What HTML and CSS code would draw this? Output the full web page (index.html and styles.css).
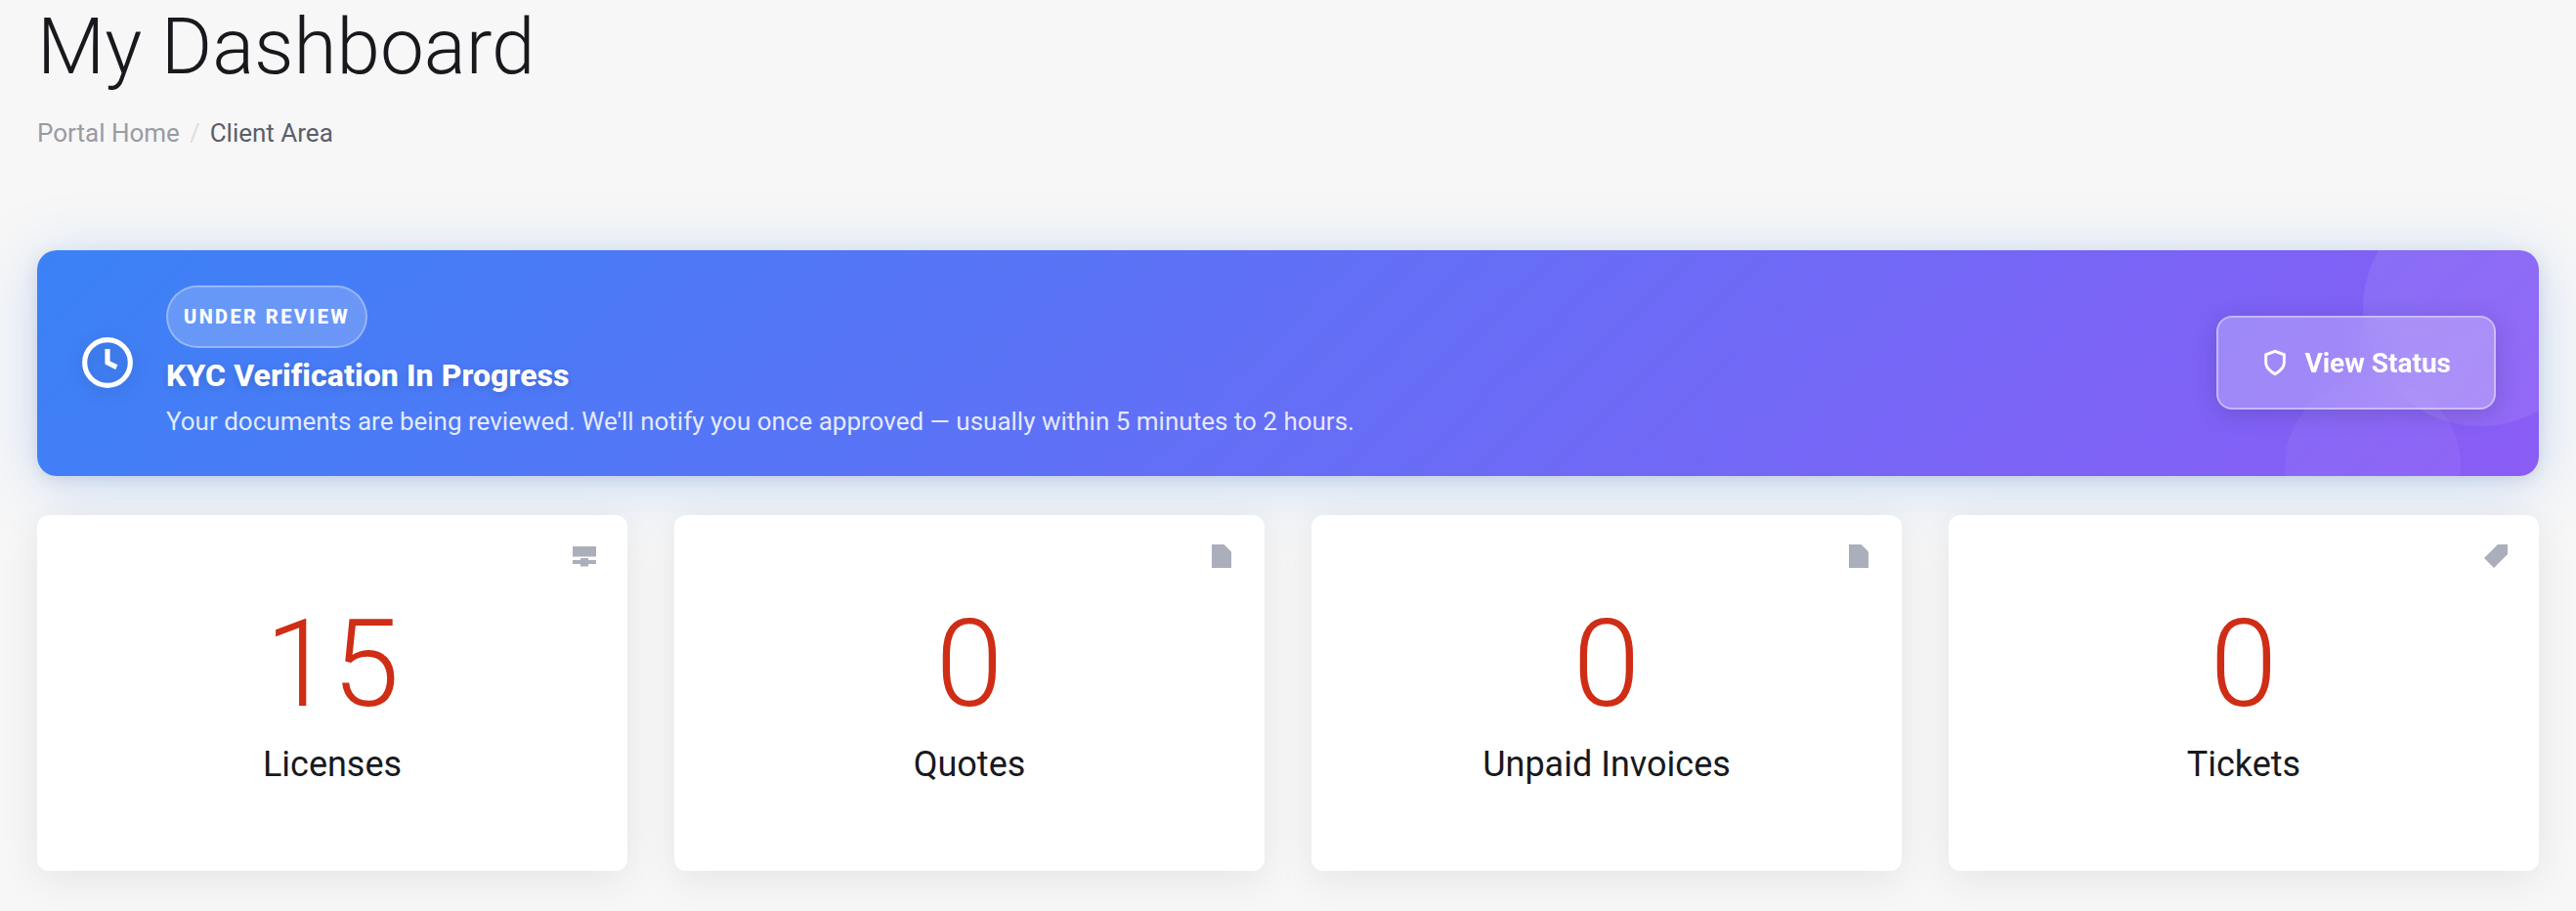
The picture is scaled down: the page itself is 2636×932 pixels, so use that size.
FILE: index.html
```
<!DOCTYPE html>
<html lang="en">
<head>
    <meta charset="UTF-8">
    <meta name="viewport" content="width=device-width, initial-scale=1.0">
    <title>My Dashboard</title>
    <link rel="stylesheet" href="styles.css">
</head>
<body>
    <header class="page-header">
        <h1>My Dashboard</h1>
        <nav class="breadcrumb">
            <a href="#">Portal Home</a>
            <span class="separator">/</span>
            <span class="current">Client Area</span>
        </nav>
    </header>

    <section class="kyc-banner">
        <svg class="kyc-icon" viewBox="0 0 24 24" fill="none" stroke="currentColor" stroke-width="2.2">
            <circle cx="12" cy="12" r="10"/>
            <polyline points="12 6 12 12 16 14"/>
        </svg>
        <div class="kyc-content">
            <span class="kyc-badge">Under Review</span>
            <h2>KYC Verification In Progress</h2>
            <p>Your documents are being reviewed. We'll notify you once approved — usually within 5 minutes to 2 hours.</p>
        </div>
        <a href="#" class="kyc-button">
            <svg viewBox="0 0 24 24" fill="none" stroke="currentColor" stroke-width="2.5">
                <path d="M12 22s8-4 8-10V5l-8-3-8 3v7c0 6 8 10 8 10z"/>
            </svg>
            View Status
        </a>
    </section>

    <main class="tiles">
        <a href="#" class="tile">
            <svg class="tile-icon" viewBox="0 0 24 24" fill="currentColor">
                <path d="M0 2h24v10.500H0zM0 16h8v-2h8v2h8v4h-8v2.500H8V20H0z"/>
            </svg>
            <span class="tile-stat">15</span>
            <span class="tile-title">Licenses</span>
        </a>
        <a href="#" class="tile">
            <svg class="tile-icon" viewBox="0 0 24 24" fill="currentColor">
                <path d="M2 0h12.500L22 7.500V24H2z"/>
            </svg>
            <span class="tile-stat">0</span>
            <span class="tile-title">Quotes</span>
        </a>
        <a href="#" class="tile">
            <svg class="tile-icon" viewBox="0 0 24 24" fill="currentColor">
                <path d="M2 0h12.500L22 7.500V24H2z"/>
            </svg>
            <span class="tile-stat">0</span>
            <span class="tile-title">Unpaid Invoices</span>
        </a>
        <a href="#" class="tile">
            <svg class="tile-icon" viewBox="0 0 24 24" fill="currentColor">
                <path d="M14 0h10v10L10 24 0 14z"/>
            </svg>
            <span class="tile-stat">0</span>
            <span class="tile-title">Tickets</span>
        </a>
    </main>
</body>
</html>
```
FILE: styles.css
```
* {
    box-sizing: border-box;
}

body {
    margin: 0;
    padding: 0 38px;
    height: 932px;
    overflow: hidden;
    background-color: #f7f7f7;
    color: #18191d;
    font-family: Roboto, "Liberation Sans", sans-serif;
}

a {
    color: inherit;
    text-decoration: none;
}

.page-header {
    height: 256px;
}

h1 {
    margin: 0;
    font-size: 80px;
    font-weight: 300;
    line-height: 96px;
}

.breadcrumb {
    display: flex;
    margin-top: 20px;
    font-size: 26px;
    line-height: 40px;
    color: #989ba6;
}

.separator {
    padding: 0 10px;
    color: #dcdde3;
}

.current {
    color: #5b5e6b;
}

.kyc-banner {
    position: relative;
    display: flex;
    align-items: center;
    gap: 32px;
    height: 231px;
    padding: 0 44px 1px;
    border-radius: 20px;
    background: linear-gradient(135deg, #3b82f6 0%, #8b5cf6 100%);
    box-shadow: 0 8px 64px rgba(59, 130, 246, 0.25), 0 4px 16px rgba(0, 0, 0, 0.1);
    color: #fff;
}

/* decorative circles */
.kyc-banner::before {
    content: "";
    position: absolute;
    inset: 0;
    border-radius: 20px;
    background:
        radial-gradient(circle at calc(100% - 60px) 60px, rgba(255, 255, 255, 0.08) 119.5px, transparent 120.5px),
        radial-gradient(circle at calc(100% - 170px) 221px, rgba(255, 255, 255, 0.05) 89.5px, transparent 90.5px);
}

.kyc-icon {
    flex: none;
    width: 56px;
    height: 56px;
    filter: drop-shadow(0 4px 8px rgba(0, 0, 0, 0.15));
}

.kyc-content {
    flex: 1;
}

.kyc-badge {
    display: block;
    width: fit-content;
    padding: 0 16px;
    border: 2px solid rgba(255, 255, 255, 0.3);
    border-radius: 32px;
    background-color: rgba(255, 255, 255, 0.2);
    font-size: 20px;
    font-weight: 800;
    letter-spacing: 2.4px;
    line-height: 60px;
    text-transform: uppercase;
}

.kyc-content h2 {
    margin: 8px 0 0;
    font-size: 32px;
    font-weight: 800;
    letter-spacing: 0.08px;
    line-height: 40px;
    text-shadow: 0 2px 8px rgba(0, 0, 0, 0.15);
}

.kyc-content p {
    margin: 8px 0 0;
    font-size: 26px;
    line-height: 38px;
    color: rgba(255, 255, 255, 0.85);
}

.kyc-button {
    position: relative;
    display: flex;
    align-items: center;
    gap: 16px;
    height: 96px;
    padding: 0 44px;
    border: 2px solid rgba(255, 255, 255, 0.4);
    border-radius: 16px;
    background-color: rgba(255, 255, 255, 0.25);
    backdrop-filter: blur(20px);
    box-shadow: 0 4px 24px rgba(0, 0, 0, 0.15);
    font-size: 28px;
    font-weight: 700;
    white-space: nowrap;
}

.kyc-button svg {
    width: 28px;
    height: 28px;
}

.tiles {
    display: grid;
    grid-template-columns: repeat(4, 1fr);
    gap: 48px;
    margin-top: 40px;
}

.tile {
    position: relative;
    display: flex;
    flex-direction: column;
    align-items: center;
    height: 364px;
    padding-top: 80px;
    border-radius: 12px;
    background-color: #fff;
    box-shadow: 0 8px 40px rgba(0, 0, 0, 0.08);
}

.tile-icon {
    position: absolute;
    top: 30px;
    right: 32px;
    width: 24px;
    height: 24px;
    color: #abaebb;
}

.tile-stat {
    font-size: 124px;
    font-weight: 300;
    line-height: 146px;
    color: #cf2d15;
}

.tile-title {
    margin-top: 7px;
    font-size: 36px;
    line-height: 44px;
}
```
